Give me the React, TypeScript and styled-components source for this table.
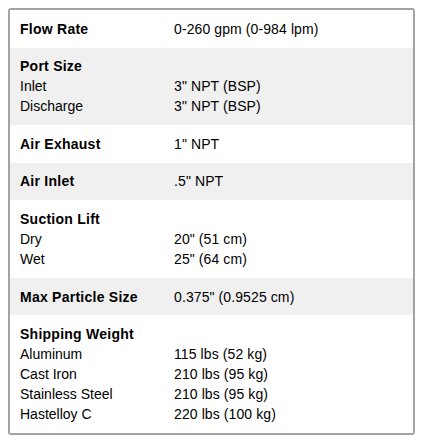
import React from "react";
import styled, { createGlobalStyle } from "styled-components";

const Global = createGlobalStyle`
  body {
    margin: 8px;
    background: #ffffff;
    font-family: "Liberation Sans", Arial, sans-serif;
    color: #000000;
  }
`;

const Box = styled.div`
  border: 2px solid #a3a3a3;
  border-radius: 3px;
  background: #ffffff;
  overflow: hidden;
`;

const Row = styled.div<{ $shaded: boolean }>`
  background: ${(p) => (p.$shaded ? "#f0f0f0" : "#ffffff")};
  padding: 8.785px 10px;
  display: grid;
  grid-template-columns: 154px 1fr;
  font-size: 14px;
  line-height: 20px;
`;

const Label = styled.div<{ $bold?: boolean }>`
  font-weight: ${(p) => (p.$bold ? 700 : 400)};
  letter-spacing: ${(p) => (p.$bold ? "0.25px" : "0")};
  white-space: nowrap;
`;

const Value = styled.div`
  white-space: nowrap;
  letter-spacing: 0.1px;
`;

type Line = { label: string; value?: string; bold?: boolean };
type Section = Line[];

const sections: Section[] = [
  [{ label: "Flow Rate", value: "0-260 gpm (0-984 lpm)", bold: true }],
  [
    { label: "Port Size", bold: true },
    { label: "Inlet", value: '3" NPT (BSP)' },
    { label: "Discharge", value: '3" NPT (BSP)' },
  ],
  [{ label: "Air Exhaust", value: '1" NPT', bold: true }],
  [{ label: "Air Inlet", value: '.5" NPT', bold: true }],
  [
    { label: "Suction Lift", bold: true },
    { label: "Dry", value: '20" (51 cm)' },
    { label: "Wet", value: '25" (64 cm)' },
  ],
  [{ label: "Max Particle Size", value: '0.375" (0.9525 cm)', bold: true }],
  [
    { label: "Shipping Weight", bold: true },
    { label: "Aluminum", value: "115 lbs (52 kg)" },
    { label: "Cast Iron", value: "210 lbs (95 kg)" },
    { label: "Stainless Steel", value: "210 lbs (95 kg)" },
    { label: "Hastelloy C", value: "220 lbs (100 kg)" },
  ],
];

export default function App() {
  return (
    <>
      <Global />
      <Box>
        {sections.map((sec, i) => (
          <Row key={i} $shaded={i % 2 === 1}>
            {sec.map((l, j) => (
              <React.Fragment key={j}>
                <Label $bold={l.bold}>{l.label}</Label>
                <Value>{l.value ?? ""}</Value>
              </React.Fragment>
            ))}
          </Row>
        ))}
      </Box>
    </>
  );
}
